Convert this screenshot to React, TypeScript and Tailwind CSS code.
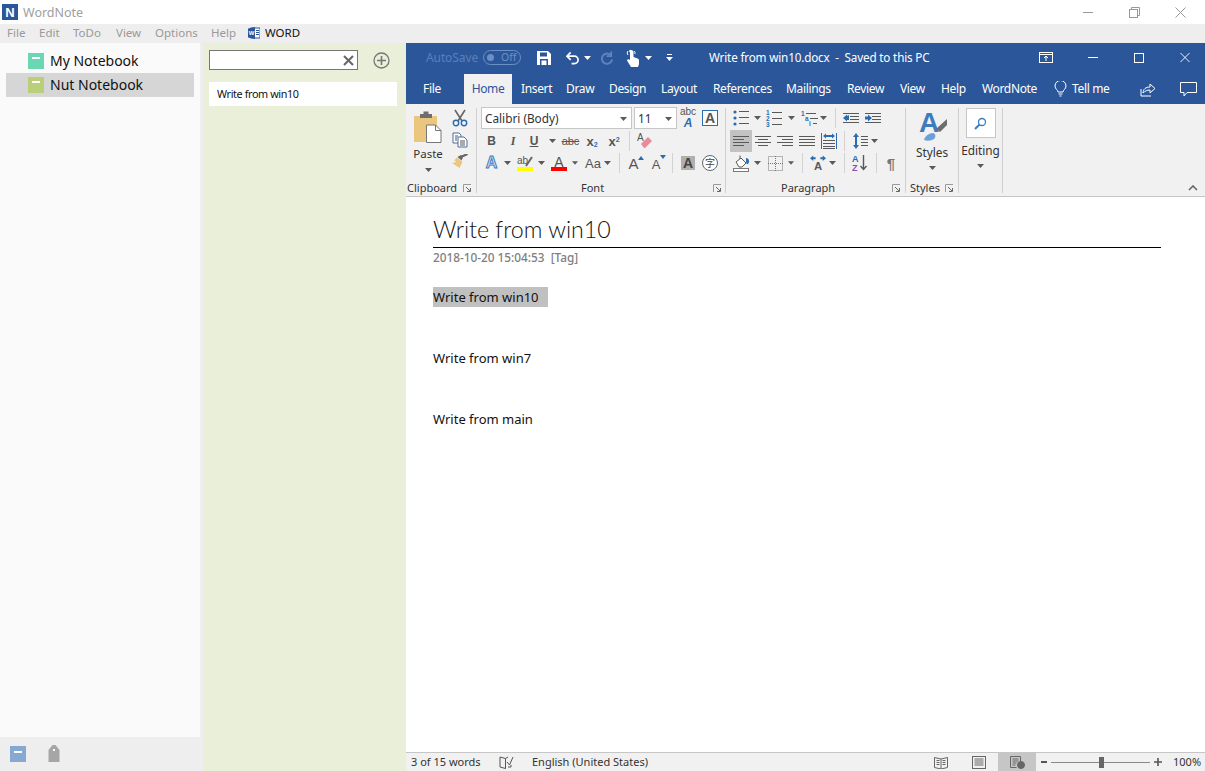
import React from "react";

const F = "font-['Noto_Sans',sans-serif]";

const Caret = ({ c = "#5a5a5a" }: { c?: string }) => (
  <svg width="7" height="4" viewBox="0 0 7 4"><path d="M0 0h7L3.5 4z" fill={c} /></svg>
);

const C = ({ c, children }: { c: string; children?: React.ReactNode }) => (
  <div className={`flex items-center justify-center shrink-0 h-full ${c}`}>{children}</div>
);

const VSep = () => <div className="w-px h-[20px] bg-[#d2d2d2]" />;
const GroupSep = () => <div className="w-px h-[85px] mt-[4px] bg-[#d0d0d0] shrink-0" />;

const Launcher = () => (
  <svg width="9" height="9" viewBox="0 0 9 9" fill="none">
    <path d="M0.5 8V0.5H8" stroke="#9a9a9a" />
    <path d="M3 3l4 4M7.5 4v3.5H4" stroke="#666" />
  </svg>
);

const Lines = ({ a }: { a: "l" | "c" | "r" | "j" }) => {
  const rows: [number, number][] =
    a === "l" ? [[0, 16], [0, 11], [0, 16], [0, 11]] :
    a === "c" ? [[0, 16], [3, 13], [0, 16], [3, 13]] :
    a === "r" ? [[0, 16], [5, 16], [0, 16], [5, 16]] :
    [[0, 16], [0, 16], [0, 16], [0, 16]];
  return (
    <svg width="16" height="12" viewBox="0 0 16 12">
      {rows.map((r, i) => <rect key={i} x={r[0]} y={i * 3 + 1} width={r[1] - r[0]} height="1" fill="#595959" />)}
    </svg>
  );
};

const Paste = () => (
  <svg width="30" height="34" viewBox="0 0 30 34">
    <path d="M1 5h23v26H1z" fill="#ebc67f" />
    <path d="M7 7V3h3.5V0.5h5V3H19v4z" fill="#6e6e6e" />
    <path d="M13.5 14h9l5.5 5.5V31.5H13.5z" fill="#fff" stroke="#777" />
    <path d="M22.5 14v5.5H28" fill="none" stroke="#777" />
  </svg>
);
const Scissors = () => (
  <svg width="16" height="18" viewBox="0 0 16 18" fill="none">
    <path d="M3 1l7 11M13 1L6 12" stroke="#666" strokeWidth="1.6" />
    <circle cx="4" cy="14" r="2.7" stroke="#2b6cb0" strokeWidth="1.4" />
    <circle cx="12" cy="14" r="2.7" stroke="#2b6cb0" strokeWidth="1.4" />
  </svg>
);
const Copy = () => (
  <svg width="16" height="16" viewBox="0 0 16 16" fill="#fff" stroke="#4b6f9e">
    <path d="M1 1h6l2 2v8H1z" />
    <path d="M6 5h6l3 3v7H6z" />
    <path d="M8 9h5M8 11h5M8 13h5M3 4h3M3 6h2M3 8h2" stroke="#555" />
  </svg>
);
const Brush = () => (
  <svg width="16" height="14" viewBox="0 0 16 14">
    <path d="M5 3.500L10.500 8 7.500 14 0 9l3-.5 1-1.500-2-.5z" fill="#ebc67f" />
    <path d="M5.500 3L9 1l2 1-.5 2.500-1 2z" fill="#666" />
    <path d="M10 2.500L15.500 0" stroke="#666" strokeWidth="2.200" />
  </svg>
);

const Bullets = () => (
  <svg width="16" height="16" viewBox="0 0 16 16">
    {[2, 8, 14].map((y) => (
      <g key={y}><circle cx="2" cy={y} r="1.6" fill="#2b6cb0" /><rect x="6" y={y - 1} width="10" height="1" fill="#595959" /></g>
    ))}
  </svg>
);
const Numbers = () => (
  <svg width="16" height="17" viewBox="0 0 16 17">
    {[[1, "1"], [7, "2"], [13, "3"]].map(([y, t]) => (
      <g key={String(y)}>
        <text x="0" y={Number(y) + 3.5} fontSize="6.5" fontWeight="700" fill="#2b6cb0" fontFamily="Liberation Sans">{t}</text>
        <rect x="6" y={Number(y) + 1} width="10" height="1" fill="#595959" />
      </g>
    ))}
  </svg>
);
const Multi = () => (
  <svg width="17" height="17" viewBox="0 0 17 17">
    <text x="0" y="6" fontSize="6.5" fontWeight="700" fill="#2b6cb0" fontFamily="Liberation Sans">1</text>
    <rect x="5" y="3" width="10" height="1" fill="#595959" />
    <text x="4" y="11" fontSize="6.5" fontWeight="700" fill="#2b6cb0" fontFamily="Liberation Sans">a</text>
    <rect x="9" y="8" width="8" height="1" fill="#595959" />
    <text x="8" y="16" fontSize="6.5" fontWeight="700" fill="#2b6cb0" fontFamily="Liberation Sans">i</text>
    <rect x="12" y="13" width="4" height="1" fill="#595959" />
  </svg>
);
const Indent = ({ out }: { out?: boolean }) => (
  <svg width="16" height="12" viewBox="0 0 16 12">
    {[1, 4, 7, 10].map((y) => <rect key={y} x={y === 1 || y === 10 ? 0 : 7} y={y} width={y === 1 || y === 10 ? 16 : 9} height="1" fill="#595959" />)}
    <path d={out ? "M6 3v5H4v1.5L0 6l4-3.5V4z" : "M0 4.5h3V2.5L7 6 3 9.5v-2H0z"} fill="#2b6cb0" />
  </svg>
);
const Distributed = () => (
  <svg width="16" height="16" viewBox="0 0 16 16">
    <rect x="0" y="0" width="1" height="16" fill="#2b6cb0" />
    <rect x="15" y="0" width="1" height="16" fill="#2b6cb0" />
    <path d="M2 3l3-2.5V2h6V0.5L14 3l-3 2.5V4H5v1.5z" fill="#2b6cb0" />
    {[7, 10, 13].map((y) => <rect key={y} x="2" y={y} width="12" height="1" fill="#595959" />)}
    <rect x="2" y="15" width="12" height="1" fill="#595959" />
  </svg>
);
const Spacing = () => (
  <svg width="15" height="16" viewBox="0 0 15 16">
    <path d="M3 0l3 4H4v8h2l-3 4-3-4h2V4H0z" fill="#2b6cb0" />
    {[3, 6, 9, 12].map((y) => <rect key={y} x="8" y={y} width="7" height="1" fill="#595959" />)}
  </svg>
);
const Shading = () => (
  <svg width="17" height="17" viewBox="0 0 17 17" fill="none">
    <path d="M3 7l5-4 5 5-4 4H6z" fill="#fff" stroke="#595959" />
    <path d="M7 4V0.500" stroke="#595959" />
    <path d="M13 3c2 0 3 1.500 3 3.500s-1 2.500-2 2.500-1-3-1-6z" fill="#2b6cb0" />
    <rect x="0.500" y="13.500" width="15" height="3" fill="#fff" stroke="#7a7a7a" />
  </svg>
);
const Borders = () => (
  <svg width="15" height="15" viewBox="0 0 15 15" fill="none" stroke="#777" strokeDasharray="1 1">
    <rect x="0.500" y="0.500" width="14" height="14" />
    <path d="M7.500 0v15M0 7.500h15" />
  </svg>
);
const TextDir = () => (
  <svg width="17" height="16" viewBox="0 0 17 16">
    <path d="M0 3l3.500-3V2H6v2H3.500v2zM17 3l-3.500-3V2H11v2h2.500v2z" fill="#2b6cb0" />
    <text x="8.500" y="15" textAnchor="middle" fontSize="12" fontWeight="700" fill="#595959" fontFamily="Liberation Sans">A</text>
  </svg>
);
const Sort = () => (
  <svg width="16" height="18" viewBox="0 0 16 18">
    <text x="0" y="8" fontSize="9" fontWeight="700" fill="#2b6cb0" fontFamily="Liberation Sans">A</text>
    <text x="0" y="17" fontSize="9" fontWeight="700" fill="#8a4fb5" fontFamily="Liberation Sans">Z</text>
    <path d="M11.500 1v14M8.500 12l3 3.500 3-3.500" fill="none" stroke="#595959" strokeWidth="1.400" />
  </svg>
);

const T = ({ c, children }: { c: string; children: React.ReactNode }) => (
  <span className={`font-['Liberation_Sans',sans-serif] leading-none ${c}`}>{children}</span>
);

const StylesIcon = () => (
  <svg className="-mt-[5px]" width="33" height="36" viewBox="0 -5 33 36">
    <text x="3" y="21" fontSize="28" fontWeight="700" fill="#3f7cbd" fontFamily="Liberation Sans">A</text>
    <path d="M20 18L31 8v6l-7 7z" fill="#6e6e6e" />
    <path d="M8 29c1-4 5-7 9-7 3 1 3 4 1 6-3 2-7 2-10 1z" fill="#6aa1d8" />
  </svg>
);

const WinMin = () => <div className="w-[10px] h-px bg-white" />;

function Sidebar() {
  const Nb = ({ color, label, on }: { color: string; label: string; on?: boolean }) => (
    <div className={`h-[24px] flex items-center pl-[22px] ${on ? "bg-[#d6d6d6]" : ""}`}>
      <div className={`w-[16px] h-[16px] flex justify-center pt-[4px] ${color}`}>
        <div className="w-[8px] h-[2px] bg-white" />
      </div>
      <span className={`ml-[6px] text-[14px] text-[#111] leading-none ${F}`}>{label}</span>
    </div>
  );
  return (
    <div className="w-[200px] shrink-0 bg-[#fafafa] flex flex-col">
      <div className="pt-[6px] px-[6px]">
        <Nb color="bg-[#6bd6b3]" label="My Notebook" />
        <Nb color="bg-[#b9cf7a]" label="Nut Notebook" on />
      </div>
      <div className="mt-auto h-[34px] bg-[#eeeeee] flex items-start pt-[9px] pl-[10px]">
        <div className="w-[16px] h-[16px] bg-[#87a8d0] flex justify-center pt-[5px]">
          <div className="w-[8px] h-[2px] bg-white" />
        </div>
        <svg className="ml-[22px] -mt-[1px]" width="12" height="17" viewBox="0 0 11 17">
          <path d="M0 5l4-5h3l4 5v12H0z" fill="#a6a6a6" />
          <rect x="4.500" y="4" width="2" height="2" fill="#fff" />
        </svg>
      </div>
    </div>
  );
}

function NoteList() {
  return (
    <div className="w-[203px] shrink-0 bg-[#e9efd8] px-[6px] pt-[7px]">
      <div className="flex items-center">
        <div className="w-[149px] h-[20px] bg-white border border-[#777] flex items-center justify-end pr-[3px]">
          <svg width="11" height="11" viewBox="0 0 11 11"><path d="M1 1l9 9M10 1l-9 9" stroke="#666" strokeWidth="2" /></svg>
        </div>
        <svg className="ml-[15px]" width="17" height="17" viewBox="0 0 17 17" fill="none">
          <circle cx="8.500" cy="8.500" r="7.500" stroke="#777" strokeWidth="1.300" />
          <path d="M8.500 4v9M4 8.500h9" stroke="#777" strokeWidth="1.600" />
        </svg>
      </div>
      <div className={`mt-[12px] w-[188px] h-[24px] bg-white flex items-center pl-[8px] text-[10.800px] text-[#111] tracking-[-0.38px] ${F}`}>
        Write from win10
      </div>
    </div>
  );
}

function WordTitle() {
  return (
    <div className="h-[29px] mb-[2px] flex items-center text-white">
      <span className="ml-[20px] w-[50px] text-[12px] text-[#5a7fb8] tracking-[-0.1px]">AutoSave</span>
      <div className="ml-[7px] w-[38px] h-[15px] rounded-full border border-[#6d90c4] flex items-center pl-[3px]">
        <div className="w-[7px] h-[7px] rounded-full bg-[#6d90c4]" />
        <span className="ml-[7px] text-[10.500px] leading-none text-[#6d90c4]">Off</span>
      </div>
      <C c="ml-[16px] w-[14px]">
        <svg width="14" height="14" viewBox="0 0 14 14">
          <path d="M0 0h11l3 3v11H0z" fill="#fff" />
          <rect x="3" y="1.500" width="7" height="4" fill="#2b579a" />
          <rect x="3" y="8" width="8" height="6" fill="#2b579a" />
          <rect x="4.500" y="9.500" width="5" height="4.500" fill="#fff" />
        </svg>
      </C>
      <C c="ml-[15px] w-[14px]">
        <svg width="15" height="14" viewBox="0 0 15 14" fill="none">
          <path d="M1 5h8a4 4 0 0 1 0 8H6" stroke="#fff" strokeWidth="1.800" />
          <path d="M5 1L1 5l4 4" stroke="#fff" strokeWidth="1.800" />
        </svg>
      </C>
      <C c="ml-[4px] w-[7px]"><Caret c="#fff" /></C>
      <C c="ml-[9px] w-[14px]">
        <svg width="15" height="15" viewBox="0 0 15 15" fill="none" stroke="#5f84bd" strokeWidth="2">
          <path d="M12 1v5H7" />
          <path d="M12 5.500a5.500 5.500 0 1 0 1 4" />
        </svg>
      </C>
      <C c="ml-[12px] w-[14px]">
        <svg width="14" height="18" viewBox="0 0 14 18">
          <path d="M5 1a2.500 2.500 0 0 1 2.500 2.500V8l4 1.500c1 .4 1.500 1.200 1.500 2V15l-1 3H5L1 11.500 2 10l2 1V3.500A1 1 0 0 1 5 1z" fill="#fff" />
          <path d="M2 6a3 3 0 0 1 0-4M8 2a3 3 0 0 1 1 3" stroke="#fff" fill="none" />
        </svg>
      </C>
      <C c="ml-[5px] w-[7px]"><Caret c="#fff" /></C>
      <C c="ml-[14px] w-[7px]">
        <svg width="7" height="8" viewBox="0 0 7 8"><rect x="1" y="0" width="5" height="1" fill="#fff" /><path d="M0 3h7L3.500 7z" fill="#fff" /></svg>
      </C>
      <span className="ml-[36px] w-[299px] text-[11.700px] tracking-[-0.17px] whitespace-nowrap">Write from win10.docx&nbsp; -&nbsp; Saved to this PC</span>
      <C c="ml-[31px] w-[14px]">
        <svg width="14" height="11" viewBox="0 0 14 11" fill="none" stroke="#fff">
          <rect x="0.500" y="0.500" width="13" height="10" />
          <path d="M0 2.500h14M7 9V4.500M5 6l2-2 2 2" />
        </svg>
      </C>
      <C c="ml-[35px] w-[10px]"><WinMin /></C>
      <C c="ml-[36px] w-[10px]"><div className="w-[10px] h-[10px] border border-white" /></C>
      <C c="ml-[36px] w-[10px]">
        <svg width="11" height="11" viewBox="0 0 11 11"><path d="M0.500 0.500l10 10M10.500 0.500l-10 10" stroke="#fff" /></svg>
      </C>
    </div>
  );
}

function WordTabs() {
  const Tab = ({ c, t }: { c: string; t: string }) => <div className={`${c} shrink-0`}>{t}</div>;
  return (
    <div className="h-[30px] flex items-center text-white text-[12px] tracking-[-0.35px]">
      <div className="w-[52px] text-center shrink-0">File</div>
      <div className="ml-[6px] w-[48px] h-full bg-[#f1f1f1] text-[#2b579a] flex items-center justify-center shrink-0">Home</div>
      <Tab c="ml-[9px] w-[45px]" t="Insert" />
      <Tab c="w-[43px]" t="Draw" />
      <Tab c="w-[52px]" t="Design" />
      <Tab c="w-[52px]" t="Layout" />
      <Tab c="w-[73px]" t="References" />
      <Tab c="w-[61px]" t="Mailings" />
      <Tab c="w-[53px]" t="Review" />
      <Tab c="w-[41px]" t="View" />
      <Tab c="w-[41px]" t="Help" />
      <Tab c="w-[72px]" t="WordNote" />
      <div className="w-[18px] shrink-0">
        <svg width="13" height="16" viewBox="0 0 13 16" fill="none" stroke="#fff">
          <path d="M4 11c0-2-3-3-3-6a5.500 5.500 0 0 1 11 0c0 3-3 4-3 6z" />
          <path d="M4.500 13h4M5.500 15h2" />
        </svg>
      </div>
      <Tab c="w-[68px]" t="Tell me" />
      <svg width="16" height="15" viewBox="0 0 16 15" fill="none" stroke="#fff">
        <path d="M1 7v7h10" />
        <path d="M3 11c0-4 3-6 7-6V2l5 4.500L10 11V8c-3 0-5 1-7 3z" />
      </svg>
      <svg className="ml-[24px]" width="17" height="15" viewBox="0 0 17 15" fill="none" stroke="#fff">
        <path d="M0.500 0.500h16v10H7l-3 3.500v-3.500H0.500z" />
      </svg>
    </div>
  );
}

function Ribbon() {
  const Label = ({ children }: { children: React.ReactNode }) => (
    <div className="h-[18px] pt-[2px] flex items-center text-[11px] text-[#333]">{children}</div>
  );
  const Row = ({ children }: { children: React.ReactNode }) => <div className="h-[22px] flex items-center">{children}</div>;
  return (
    <div className="h-[93px] bg-[#f1f1f1] border-b border-[#c6c6c6] flex items-start text-[#333] shrink-0">
      {/* Clipboard */}
      <div className="w-[70px] shrink-0">
        <div className="h-[74px] flex">
          <div className="w-[44px] flex flex-col items-center pt-[7px]">
            <Paste />
            <span className="text-[11.500px] leading-none mt-[3px]">Paste</span>
            <div className="mt-[8px] leading-none flex"><Caret /></div>
          </div>
          <div className="ml-[2px] w-[16px] flex flex-col items-center pt-[5px]">
            <Scissors />
            <div className="mt-[5px]"><Copy /></div>
            <div className="mt-[6px]"><Brush /></div>
          </div>
        </div>
        <Label>
          <span className="ml-[1px]">Clipboard</span>
          <div className="ml-auto mr-[4px] flex"><Launcher /></div>
        </Label>
      </div>
      <GroupSep />
      {/* Font */}
      <div className="w-[248px] shrink-0">
        <div className="h-[74px] pt-[3px] pl-[4px]">
          <Row>
            <div className="w-[151px] h-full bg-white border border-[#c6c6c6] flex items-center justify-between pl-[3px] pr-[4px] pt-[1px] text-[11.800px]">
              <span>Calibri (Body)</span><Caret />
            </div>
            <div className="ml-[2px] w-[43px] h-full bg-white border border-[#c6c6c6] flex items-center justify-between pl-[3px] pr-[4px] pt-[1px] text-[11.800px]">
              <span>11</span><Caret />
            </div>
            <C c="w-[22px]">
              <div className="w-[15px] flex flex-col items-center">
                <T c="text-[10px] text-[#555]">abc</T>
                <T c="text-[12px] font-bold italic text-[#2b6cb0]">A</T>
              </div>
            </C>
            <C c="w-[22px]">
              <div className="w-[16px] h-[16px] border border-[#2b6cb0] flex items-center justify-center bg-[#fbfbfb]">
                <T c="text-[14px] font-bold text-[#555]">A</T>
              </div>
            </C>
          </Row>
          <div className="h-px" />
          <Row>
            <C c="w-[21px]"><T c="text-[12px] font-bold text-[#555]">B</T></C>
            <C c="w-[22px]"><T c="text-[12px] font-bold italic text-[#555] font-['Liberation_Serif',serif]">I</T></C>
            <C c="w-[20px]"><T c="text-[12px] font-bold underline text-[#555]">U</T></C>
            <C c="w-[16px]"><Caret /></C>
            <C c="w-[21px]"><T c="text-[11px] line-through text-[#555]">abc</T></C>
            <C c="w-[22px]"><T c="text-[13px] font-bold text-[#555]">x<sub className="text-[7px] text-[#2b6cb0]">2</sub></T></C>
            <C c="w-[22px]"><T c="text-[13px] font-bold text-[#555]">x<sup className="text-[7px] text-[#2b6cb0]">2</sup></T></C>
            <C c="w-[8px]"><VSep /></C>
            <C c="w-[24px]">
              <svg width="16" height="16" viewBox="0 0 16 16">
                <text x="0" y="8" fontSize="10" fill="#555" fontFamily="Liberation Sans">A</text>
                <path d="M4 11l7-7 4 4-7 7H7z" fill="#ea8a9a" />
              </svg>
            </C>
          </Row>
          <Row>
            <C c="w-[21px]">
              <span className="font-['Liberation_Sans',sans-serif] text-[16px] font-bold leading-none text-[#dceafa] [-webkit-text-stroke:1px_#3f7cbd]">A</span>
            </C>
            <C c="w-[11px]"><Caret /></C>
            <C c="w-[24px]">
              <div className="w-[16px] flex flex-col items-center">
                <svg width="16" height="12" viewBox="0 0 16 12">
                  <text x="0" y="9" fontSize="10" fill="#555" fontFamily="Liberation Sans">ab</text>
                  <path d="M9 11l6-9" stroke="#666" strokeWidth="2" />
                </svg>
                <div className="w-[16px] h-[4px] bg-[#ffff00]" />
              </div>
            </C>
            <C c="w-[8px]"><Caret /></C>
            <C c="w-[26px] ml-[1px]">
              <div className="w-[16px] flex flex-col items-center">
                <T c="text-[14px] text-[#555] h-[12px]">A</T>
                <div className="w-[16px] h-[4px] bg-[#ff0000]" />
              </div>
            </C>
            <C c="w-[6px]"><Caret /></C>
            <C c="w-[16px] ml-[7px]"><T c="text-[13px] text-[#555]">Aa</T></C>
            <C c="w-[8px] ml-[2px]"><Caret /></C>
            <C c="w-[16px]"><VSep /></C>
            <C c="w-[18px]">
              <div className="flex items-start">
                <T c="text-[15px] text-[#555]">A</T>
                <svg className="-ml-[1px]" width="6" height="4" viewBox="0 0 6 4"><path d="M0 4h6L3 0z" fill="#2b6cb0" /></svg>
              </div>
            </C>
            <C c="w-[18px] ml-[5px]">
              <div className="flex items-start">
                <T c="text-[13px] text-[#555] mt-[3px]">A</T>
                <svg width="6" height="4" viewBox="0 0 6 4"><path d="M0 0h6L3 4z" fill="#2b6cb0" /></svg>
              </div>
            </C>
            <C c="w-[8px]"><VSep /></C>
            <C c="w-[24px]">
              <div className="w-[14px] h-[14px] bg-[#b0b0b0] flex items-center justify-center">
                <T c="text-[14px] font-bold text-[#444]">A</T>
              </div>
            </C>
            <C c="w-[20px]">
              <div className="w-[16px] h-[16px] rounded-full border border-[#666] flex items-center justify-center bg-white text-[10px] leading-none text-[#444] font-['Noto_Sans_CJK_SC',sans-serif]">字</div>
            </C>
          </Row>
        </div>
        <Label>
          <span className="ml-[104px]">Font</span>
          <div className="ml-auto mr-[3px] flex"><Launcher /></div>
        </Label>
      </div>
      <GroupSep />
      {/* Paragraph */}
      <div className="w-[179px] shrink-0">
        <div className="h-[74px] pt-[3px] pl-[4px]">
          <Row>
            <C c="w-[22px]"><Bullets /></C>
            <C c="w-[10px]"><Caret /></C>
            <C c="w-[24px]"><Numbers /></C>
            <C c="w-[10px]"><Caret /></C>
            <C c="w-[20px] ml-[3px]"><Multi /></C>
            <C c="w-[8px]"><Caret /></C>
            <C c="w-[16px]"><VSep /></C>
            <C c="w-[16px]"><Indent out /></C>
            <C c="w-[16px] ml-[6px]"><Indent /></C>
          </Row>
          <div className="h-px" />
          <Row>
            <C c="w-[22px] bg-[#c2c2c2]"><Lines a="l" /></C>
            <C c="w-[22px]"><Lines a="c" /></C>
            <C c="w-[22px]"><Lines a="r" /></C>
            <C c="w-[22px]"><Lines a="j" /></C>
            <C c="w-[22px]"><Distributed /></C>
            <C c="w-[8px]"><VSep /></C>
            <C c="w-[20px] ml-[2px]"><Spacing /></C>
            <C c="w-[8px]"><Caret /></C>
          </Row>
          <Row>
            <C c="w-[22px]"><Shading /></C>
            <C c="w-[10px]"><Caret /></C>
            <C c="w-[26px]"><Borders /></C>
            <C c="w-[6px]"><Caret /></C>
            <C c="w-[16px]"><VSep /></C>
            <C c="w-[16px]"><TextDir /></C>
            <C c="w-[12px]"><Caret /></C>
            <C c="w-[12px]"><VSep /></C>
            <C c="w-[20px]"><Sort /></C>
            <C c="w-[12px]"><VSep /></C>
            <C c="w-[18px]"><T c="text-[15px] font-bold text-[#777]">¶</T></C>
          </Row>
        </div>
        <Label>
          <span className="ml-[55px]">Paragraph</span>
          <div className="ml-auto mr-[4px] flex"><Launcher /></div>
        </Label>
      </div>
      <GroupSep />
      {/* Styles */}
      <div className="w-[52px] shrink-0">
        <div className="h-[74px] flex flex-col items-center pt-[7px]">
          <div className="ml-[1px] flex"><StylesIcon /></div>
          <span className="text-[11.800px] leading-none mt-[5px]">Styles</span>
          <div className="mt-[7px] flex"><Caret /></div>
        </div>
        <Label>
          <span className="ml-[4px]">Styles</span>
          <div className="ml-auto mr-[4px] flex"><Launcher /></div>
        </Label>
      </div>
      <GroupSep />
      {/* Editing */}
      <div className="w-[43px] shrink-0 flex flex-col items-center pt-[4px]">
        <div className="w-[30px] h-[30px] bg-white border border-[#c6c6c6] flex items-center justify-center">
          <svg width="13" height="13" viewBox="0 0 13 13" fill="none">
            <circle cx="8" cy="5" r="3.500" stroke="#3f7cbd" strokeWidth="1.300" />
            <path d="M5.500 7.500L1 12" stroke="#3f7cbd" strokeWidth="2" />
          </svg>
        </div>
        <span className="text-[11.800px] leading-none mt-[7px]">Editing</span>
        <div className="mt-[7px] flex"><Caret /></div>
      </div>
      <GroupSep />
      <div className="flex-1 self-end flex justify-end pr-[7px] pb-[5px]">
        <svg width="10" height="6" viewBox="0 0 10 6" fill="none"><path d="M1 5l4-4 4 4" stroke="#666" strokeWidth="1.600" /></svg>
      </div>
    </div>
  );
}

function Doc() {
  const Body = ({ c, children }: { c: string; children: React.ReactNode }) => (
    <div className={`h-[20px] pt-[1px] flex items-center text-[13px] text-[#111] ${c}`}>{children}</div>
  );
  return (
    <div className="flex-1 bg-white pl-[27px] pr-[44px] min-h-0">
      <div className="mt-[17px] h-[34px] border-b border-black font-['Lato',sans-serif] font-light text-[23.200px] leading-[30px] text-[#111]">
        Write from win10
      </div>
      <div className="h-[19px] flex items-center text-[11.800px] text-[#808080] font-medium">
        2018-10-20 15:04:53&nbsp;&nbsp;[Tag]
      </div>
      <Body c="mt-[20px] w-[115px] bg-[#c0c0c0]">Write from win10</Body>
      <Body c="mt-[41px]">Write from win7</Body>
      <Body c="mt-[41px]">Write from main</Body>
    </div>
  );
}

function Status() {
  return (
    <div className="h-[19px] shrink-0 bg-[#f1f1f1] border-t border-[#c6c6c6] flex items-center text-[11px] text-[#333] pl-[5px]">
      <span className="w-[88px] shrink-0">3 of 15 words</span>
      <svg className="shrink-0" width="15" height="13" viewBox="0 0 15 13" fill="none" stroke="#555">
        <path d="M6.500 2.500L1 1v10l5.500 1.500zM6.500 2.500L9 1M6.500 12.500V4" />
        <path d="M8 6l2.500 3L14 1" />
        <path d="M9 11h3V9" />
      </svg>
      <span className="ml-[18px] w-[401px] shrink-0 whitespace-nowrap">English (United States)</span>
      <svg className="shrink-0 ml-[1px]" width="14" height="13" viewBox="0 0 14 13" fill="none" stroke="#666">
        <path d="M0.500 1.500L7 3l6.500-1.500v10L7 13 0.500 11.500zM7 3v10M2.500 4.500h3M2.500 6.500h3M2.500 8.500h3M8.500 4.500h3M8.500 6.500h3M8.500 8.500h3" />
      </svg>
      <svg className="shrink-0 ml-[24px]" width="14" height="13" viewBox="0 0 14 13" fill="none" stroke="#666">
        <rect x="0.500" y="0.500" width="13" height="12" />
        <path d="M2.500 3h9M2.500 5h9M2.500 7h9M2.500 9h9" />
      </svg>
      <div className="ml-[12px] w-[38px] h-full bg-[#c6c6c6] flex items-center justify-center shrink-0">
        <svg width="15" height="13" viewBox="0 0 15 13" fill="none" stroke="#666">
          <path d="M0.500 0.500h10v7M0.500 0.500v11h6M2.500 3h6M2.500 5h6M2.500 7h4M2.500 9h3" />
          <circle cx="11" cy="9" r="3.500" fill="#666" />
        </svg>
      </div>
      <div className="ml-[5px] w-[6px] h-[2px] bg-[#555] shrink-0" />
      <div className="ml-[4px] w-[99px] h-px bg-[#888] shrink-0 flex items-center pl-[48px]">
        <div className="w-[5px] h-[11px] bg-[#666] shrink-0" />
      </div>
      <svg className="ml-[4px] shrink-0" width="8" height="8" viewBox="0 0 8 8"><path d="M4 0v8M0 4h8" stroke="#555" strokeWidth="1.600" /></svg>
      <span className="ml-[11px]">100%</span>
    </div>
  );
}

export default function App() {
  return (
    <div className={`w-[1205px] h-[771px] overflow-hidden flex flex-col bg-white ${F}`}>
      <div className="h-[24px] shrink-0 bg-white flex items-center pl-[2px]">
        <div className="w-[16px] h-[16px] bg-[#2b579a] flex items-center justify-center text-white text-[13px] font-bold leading-none font-['Liberation_Sans',sans-serif]">N</div>
        <span className="ml-[5px] pt-[2px] text-[12.500px] text-[#a0a0a0]">WordNote</span>
        <div className="ml-auto flex items-center">
          <div className="w-[10px] h-px bg-[#999]" />
          <svg className="ml-[36px]" width="11" height="11" viewBox="0 0 11 11" fill="none" stroke="#999">
            <rect x="0.500" y="2.500" width="8" height="8" /><path d="M2.500 2.500v-2h8v8h-2" />
          </svg>
          <svg className="ml-[35px] mr-[19px]" width="11" height="11" viewBox="0 0 11 11"><path d="M0.500 0.500l10 10M10.500 0.500l-10 10" stroke="#999" /></svg>
        </div>
      </div>
      <div className="h-[19px] shrink-0 bg-[#eeeeee] flex items-center pb-[2px] text-[11.500px] text-[#999]">
        <span className="ml-[7px] w-[32px]">File</span>
        <span className="w-[34px]">Edit</span>
        <span className="w-[43px]">ToDo</span>
        <span className="w-[39px]">View</span>
        <span className="w-[56px]">Options</span>
        <span className="w-[37px]">Help</span>
        <svg width="12" height="12" viewBox="0 0 12 12">
          <rect x="3" y="1" width="9" height="10" fill="#fff" stroke="#2b579a" />
          <path d="M0 1.500L7 0v12L0 10.500z" fill="#2b579a" />
          <path d="M8 3.500h3M8 5.500h3M8 7.500h3" stroke="#2b579a" />
          <text x="3.500" y="8" textAnchor="middle" fontSize="6" fontWeight="700" fill="#fff" fontFamily="Liberation Sans">W</text>
        </svg>
        <span className="ml-[5px] text-[#111]">WORD</span>
      </div>
      <div className="flex-1 flex min-h-0 bg-[#eeeeee]">
        <Sidebar />
        <div className="w-[3px] shrink-0" />
        <NoteList />
        <div className="flex-1 flex flex-col min-w-0 bg-white">
          <div className="bg-[#2b579a] h-[61px] shrink-0">
            <WordTitle />
            <WordTabs />
          </div>
          <Ribbon />
          <Doc />
          <Status />
        </div>
      </div>
    </div>
  );
}
